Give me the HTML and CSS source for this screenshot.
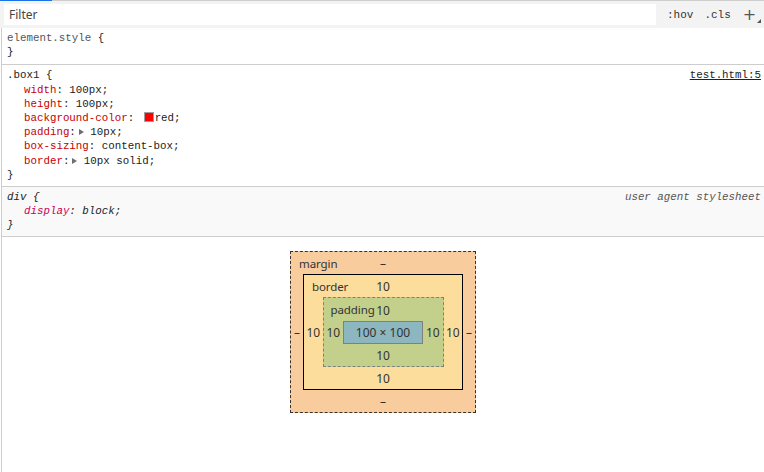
FILE: index.html
```html
<!DOCTYPE html>
<html>
<head>
<meta charset="utf-8">
<link rel="stylesheet" href="styles.css">
</head>
<body>
<div class="panel">
  <div class="tabline"><div class="tab-active"></div><div class="tab-rest"></div></div>
  <div class="toolbar">
    <div class="filter">Filter</div>
    <div class="tools">
      <span class="tool">:hov</span>
      <span class="tool">.cls</span>
      <span class="plus">+<i class="corner"></i></span>
    </div>
  </div>
  <div class="styles">
    <section class="rule">
      <div class="line"><span class="sel-dim">element.style</span> {</div>
      <div class="line">}</div>
    </section>
    <section class="rule">
      <div class="line head"><span>.box1 {</span><a class="src">test.html:5</a></div>
      <div class="line prop"><span class="name">width</span>: 100px;</div>
      <div class="line prop"><span class="name">height</span>: 100px;</div>
      <div class="line prop"><span class="name">background-color</span>: <span class="swatch"></span>red;</div>
      <div class="line prop"><span class="name">padding</span>:<span class="tri"></span> 10px;</div>
      <div class="line prop"><span class="name">box-sizing</span>: content-box;</div>
      <div class="line prop"><span class="name">border</span>:<span class="tri"></span> 10px solid;</div>
      <div class="line">}</div>
    </section>
    <section class="rule ua">
      <div class="line head"><span>div {</span><span class="ua-src">user agent stylesheet</span></div>
      <div class="line prop"><span class="name">display</span>: block;</div>
      <div class="line">}</div>
    </section>
    <div class="metrics">
      <div class="box margin">
        <span class="label">margin</span>
        <div class="v top">–</div>
        <div class="v left">–</div>
        <div class="box border">
          <span class="label">border</span>
          <div class="v top">10</div>
          <div class="v left">10</div>
          <div class="box padding">
            <span class="label">padding</span>
            <div class="v top">10</div>
            <div class="v left">10</div>
            <div class="content">100 × 100</div>
            <div class="v right">10</div>
            <div class="v bottom">10</div>
          </div>
          <div class="v right">10</div>
          <div class="v bottom">10</div>
        </div>
        <div class="v right">–</div>
        <div class="v bottom">–</div>
      </div>
    </div>
  </div>
</div>
</body>
</html>
```

FILE: styles.css
```css
html, body {
  margin: 0;
  padding: 0;
  background: #ffffff;
}
body {
  width: 764px;
  height: 472px;
  overflow: hidden;
  font-family: "Noto Sans", "Open Sans", sans-serif;
  color: #222;
}
.panel {
  display: flex;
  flex-direction: column;
  height: 472px;
}
.tabline {
  display: flex;
  height: 1px;
}
.tab-active {
  width: 52px;
  background: #1a73e8;
}
.tab-rest {
  flex: 1;
  background: #cdcdcd;
}
.toolbar {
  display: flex;
  align-items: center;
  height: 27px;
  background: #f3f3f3;
  box-sizing: border-box;
  padding: 3px 0 3px 4px;
}
.filter {
  flex: 1;
  height: 21px;
  background: #ffffff;
  font-size: 12px;
  line-height: 21px;
  color: #444;
  padding-left: 5px;
}
.tools {
  width: 108px;
  display: flex;
  align-items: center;
  font-family: "Liberation Mono", monospace;
  font-size: 11px;
  color: #333;
  padding-left: 11px;
  box-sizing: border-box;
}
.tool {
  margin-right: 11px;
}
.plus {
  position: relative;
  font-family: "DejaVu Sans", sans-serif;
  font-size: 16px;
  line-height: 18px;
  color: #555;
  margin-left: 1px;
}
.corner {
  position: absolute;
  left: 14px;
  top: 13px;
  width: 0;
  height: 0;
  border-left: 4px solid transparent;
  border-bottom: 4px solid #555;
}
.styles {
  flex: 1;
  border-left: 1px solid #cdcdcd;
  margin-left: 1px;
  display: flex;
  flex-direction: column;
}
.rule {
  border-bottom: 1px solid #cdcdcd;
  padding: 3px 3px 4px 5px;
  font-family: "Liberation Mono", monospace;
  font-size: 10.8px;
  color: #222;
}
.rule:first-child {
  padding-top: 3px;
  padding-bottom: 5px;
}
.line {
  height: 14.2px;
  line-height: 14.2px;
  white-space: pre;
}
.head {
  display: flex;
  justify-content: space-between;
}
.prop {
  padding-left: 17px;
}
.sel-dim {
  color: #555;
}
.name {
  color: #c80000;
}
.src {
  color: #222;
  text-decoration: underline;
}
.ua {
  background: #f9f9f9;
  font-style: italic;
}
.ua .name {
  color: #c80058;
}
.ua-src {
  color: #555;
}
.swatch {
  display: inline-block;
  width: 10px;
  height: 10px;
  box-sizing: border-box;
  border: 1px solid #a0a0a0;
  background: #ff0000;
  vertical-align: -1px;
  margin: 0 1px 0 3px;
}
.tri {
  display: inline-block;
  width: 0;
  height: 0;
  border-left: 5px solid #6e6e6e;
  border-top: 3.5px solid transparent;
  border-bottom: 3.5px solid transparent;
  margin-left: 3px;
  vertical-align: 0;
}
.metrics {
  display: flex;
  justify-content: center;
  padding-top: 14px;
  font-family: "Noto Sans", "Open Sans", sans-serif;
  font-size: 12px;
  color: #333;
}
.box {
  position: relative;
  display: grid;
  grid-template-columns: 1fr auto 1fr;
  grid-template-rows: 1fr auto 1fr;
  box-sizing: border-box;
  align-items: center;
  justify-items: center;
}
.box > .box, .box > .content {
  grid-column: 2;
  grid-row: 2;
}
.margin {
  width: 186px;
  height: 162px;
  background: #f9cc9d;
  border: 1px dashed #333;
}
.border {
  width: 160px;
  height: 116px;
  background: #fddd9b;
  border: 1px solid #000;
}
.padding {
  width: 121px;
  height: 70px;
  background: #c3d08b;
  border: 1px dashed #808080;
}
.content {
  width: 80px;
  height: 23px;
  box-sizing: border-box;
  background: #8cb6c0;
  border: 1px solid #808080;
  line-height: 21px;
  text-align: center;
}
.label {
  position: absolute;
  left: 8px;
  top: 4px;
  line-height: 16px;
  font-size: 11.5px;
  letter-spacing: -0.1px;
}
.padding > .label {
  left: 7px;
}
.v {
  line-height: 16px;
  position: relative;
  top: 1px;
}
.v.top {
  grid-column: 1 / 4;
  grid-row: 1;
}
.v.bottom {
  grid-column: 1 / 4;
  grid-row: 3;
}
.v.left {
  grid-column: 1;
  grid-row: 2;
}
.v.right {
  grid-column: 3;
  grid-row: 2;
}
```
